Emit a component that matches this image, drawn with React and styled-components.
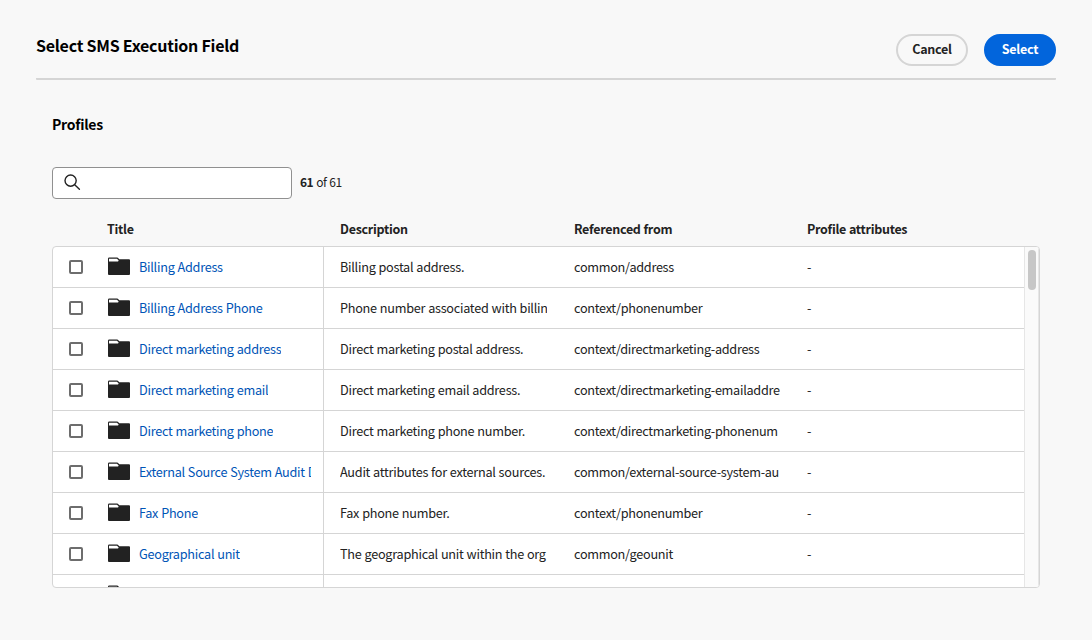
import React from "react";
import styled, { createGlobalStyle, css } from "styled-components";

const GlobalStyle = createGlobalStyle`
  * { box-sizing: border-box; }
  body {
    margin: 0;
    background: #f8f8f8;
    color: #222;
    font-family: "Noto Sans CJK SC", "Open Sans", sans-serif;
    font-size: 12.7px;
    line-height: 20px;
  }
`;

const Dialog = styled.main`
  width: 1092px;
  height: 640px;
  padding: 28px 36px 0;
  overflow: hidden;
`;

const Header = styled.header`
  display: flex;
  justify-content: space-between;
  height: 52px;
  border-bottom: 2px solid #d5d5d5;
  border-radius: 1px;
`;

const Heading = styled.h1`
  margin: 6px 0 0;
  font-size: 16px;
  line-height: 22px;
  font-weight: 700;
  color: #000;
  letter-spacing: -0.24px;
`;

const Actions = styled.div`
  display: flex;
  gap: 16px;
  padding-top: 6px;
`;

const Button = styled.button`
  width: 72px;
  height: 32px;
  padding: 0 0 3px;
  border: 2px solid ${(p) => (p.$primary ? "#0265dc" : "#d5d5d5")};
  border-radius: 16px;
  background: ${(p) => (p.$primary ? "#0265dc" : "transparent")};
  color: ${(p) => (p.$primary ? "#fff" : "#222")};
  font: 700 12.5px/20px "Noto Sans CJK SC", "Open Sans", sans-serif;
  letter-spacing: -0.25px;
`;

const Content = styled.section`
  padding: 34px 16px 0;
`;

const Subheading = styled.h2`
  margin: 0;
  font-size: 14px;
  line-height: 20px;
  font-weight: 700;
  color: #000;
  letter-spacing: -0.25px;
`;

const SearchBar = styled.div`
  display: flex;
  align-items: center;
  gap: 8px;
  margin-top: 33px;
`;

const SearchField = styled.div`
  width: 240px;
  height: 32px;
  padding: 6px 11px;
  border: 1px solid #909090;
  border-radius: 4px;
  background: #fff;
`;

const SearchSvg = styled.svg`
  display: block;
`;

const Count = styled.span`
  padding-bottom: 2px;
  font-size: 12px;
  letter-spacing: -0.5px;
  word-spacing: 0.8px;
`;

const columns = css`
  display: grid;
  grid-template-columns: 54px 217px 234px 233px 1fr;
`;

const HeadRow = styled.div`
  ${columns}
  height: 47px;
  padding: 20px 16px 0 1px;
  font-size: 12.5px;
  font-weight: 700;
  letter-spacing: -0.28px;
  word-spacing: 0.3px;
`;

const HeadCell = styled.div`
  padding-left: ${(p) => (p.$first ? "0" : "16px")};
`;

const Table = styled.div`
  display: flex;
  height: 342px;
  border: 1px solid #d5d5d5;
  border-radius: 4px;
  overflow: hidden;
  background: #fff;
`;

const Rows = styled.div`
  flex: 1;
  overflow: hidden;
`;

const Row = styled.div`
  ${columns}
  height: 41px;
  border-bottom: 1px solid #d5d5d5;
`;

const CheckCell = styled.div`
  padding: 13px 0 0 16px;
`;

const Checkbox = styled.div`
  width: 14px;
  height: 14px;
  border: 2px solid #6d6d6d;
  border-radius: 2px;
`;

const TitleCell = styled.div`
  display: flex;
  gap: 9px;
  padding: 10px 12px 0 1px;
  border-right: 1px solid #d5d5d5;
`;

const FolderSvg = styled.svg`
  flex: none;
  display: block;
`;

const Link = styled.a`
  min-width: 0;
  overflow: hidden;
  white-space: nowrap;
  color: #0054b6;
  letter-spacing: -0.27px;
  word-spacing: 0.4px;
`;

const Cell = styled.div`
  margin: 10px 11px 0 16px;
  overflow: hidden;
  white-space: nowrap;
  letter-spacing: ${(p) => (p.$path ? "-0.29px" : "-0.27px")};
  word-spacing: 0.4px;
`;

const Track = styled.div`
  width: 15px;
  padding: 3px;
  border-left: 1px solid #e6e6e6;
  border-right: 1px solid #e6e6e6;
  background: #fafafa;
`;

const Thumb = styled.div`
  width: 8px;
  height: 40px;
  border-radius: 4px;
  background: #c7c7c7;
`;

const SearchIcon = () => (
  <SearchSvg width="18" height="18" viewBox="0 0 18 18" fill="none" stroke="#222" strokeWidth="1.4">
    <circle cx="6.6" cy="6.6" r="5.6" />
    <path d="M10.7 10.7 15.4 15.3" strokeLinecap="round" />
  </SearchSvg>
);

const FolderIcon = () => (
  <FolderSvg width="22" height="18" viewBox="0 0 22 18">
    <path
      fill="#222"
      d="M1.2 .6H9.2Q9.8 .6 10.1 1.1L11.3 2.3H21Q22 2.3 22 3.3V17Q22 18 21 18H1Q0 18 0 17V1.8Q0 .6 1.2 .6Z"
    />
    <path fill="#fff" d="M1 1.8H9L10.7 3.6L10 4.4H1Z" />
  </FolderSvg>
);

const fields = [
  ["Billing Address", "Billing postal address.", "common/address"],
  ["Billing Address Phone", "Phone number associated with billin", "context/phonenumber"],
  ["Direct marketing address", "Direct marketing postal address.", "context/directmarketing-address"],
  ["Direct marketing email", "Direct marketing email address.", "context/directmarketing-emailaddre"],
  ["Direct marketing phone", "Direct marketing phone number.", "context/directmarketing-phonenum"],
  ["External Source System Audit D", "Audit attributes for external sources.", "common/external-source-system-au"],
  ["Fax Phone", "Fax phone number.", "context/phonenumber"],
  ["Geographical unit", "The geographical unit within the org", "common/geounit"],
  ["", "", ""],
];

export default function App() {
  return (
    <>
      <GlobalStyle />
      <Dialog>
        <Header>
          <Heading>Select SMS Execution Field</Heading>
          <Actions>
            <Button>Cancel</Button>
            <Button $primary>Select</Button>
          </Actions>
        </Header>
        <Content>
          <Subheading>Profiles</Subheading>
          <SearchBar>
            <SearchField>
              <SearchIcon />
            </SearchField>
            <Count>
              <b>61</b> of 61
            </Count>
          </SearchBar>
          <HeadRow>
            <span />
            <HeadCell $first>Title</HeadCell>
            <HeadCell>Description</HeadCell>
            <HeadCell>Referenced from</HeadCell>
            <HeadCell>Profile attributes</HeadCell>
          </HeadRow>
          <Table>
            <Rows>
              {fields.map(([title, description, source], i) => (
                <Row key={i}>
                  <CheckCell>
                    <Checkbox />
                  </CheckCell>
                  <TitleCell>
                    <FolderIcon />
                    <Link>{title}</Link>
                  </TitleCell>
                  <Cell>{description}</Cell>
                  <Cell $path>{source}</Cell>
                  <Cell>{title && "-"}</Cell>
                </Row>
              ))}
            </Rows>
            <Track>
              <Thumb />
            </Track>
          </Table>
        </Content>
      </Dialog>
    </>
  );
}
